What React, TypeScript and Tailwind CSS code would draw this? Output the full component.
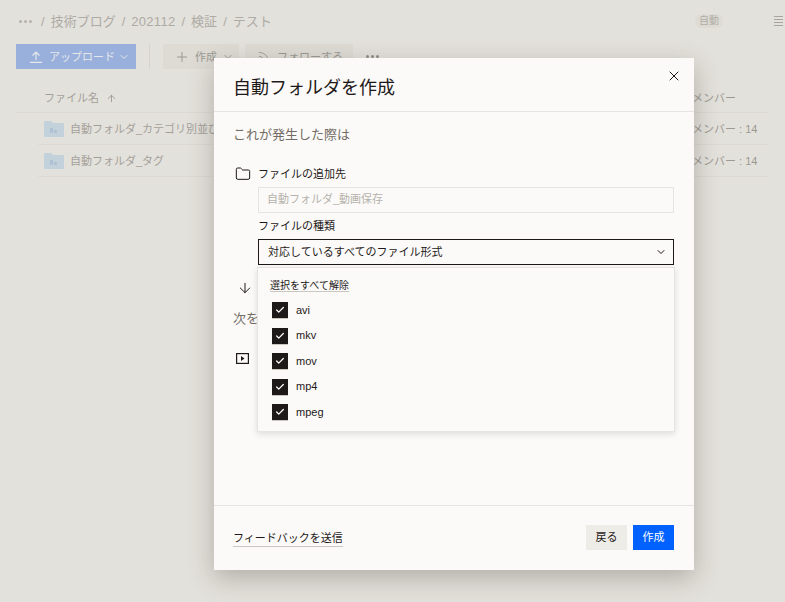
import { ArrowDown, ArrowUp, Check, ChevronDown, Folder, Plus, Rss, X } from "lucide-react";

const font = { fontFamily: '"Liberation Sans", "Noto Sans CJK JP", sans-serif' };

const fileTypes = ["avi", "mkv", "mov", "mp4", "mpeg"];

const rows = ["自動フォルダ_カテゴリ別並び替え", "自動フォルダ_タグ"];

function Dots({ className }: { className: string }) {
  return (
    <div className={`flex gap-[2px] ${className}`}>
      <span className="h-[3px] w-[3px] rounded-full bg-current" />
      <span className="h-[3px] w-[3px] rounded-full bg-current" />
      <span className="h-[3px] w-[3px] rounded-full bg-current" />
    </div>
  );
}

function FolderIcon() {
  return (
    <svg width="20" height="18" viewBox="0 0 20 18" className="shrink-0">
      <path d="M0 2a1 1 0 0 1 1-1h6l2 2h10a1 1 0 0 1 1 1v12a1 1 0 0 1-1 1H1a1 1 0 0 1-1-1z" fill="#c3d1da" />
      <rect x="6" y="8" width="3" height="5" fill="#aec2d3" />
      <rect x="10" y="10" width="3" height="3" fill="#aec2d3" />
    </svg>
  );
}

function UploadIcon() {
  return (
    <svg width="12" height="12" viewBox="0 0 12 12" fill="none" stroke="currentColor" strokeWidth="1.2" className="shrink-0">
      <path d="M6 9V1M2.5 4.5 6 1l3.5 3.5M0 11.4h12" />
    </svg>
  );
}

function PlayBoxIcon() {
  return (
    <svg width="13" height="11" viewBox="0 0 13 11" className="ml-[3px] mt-[25px]">
      <rect x="0.6" y="0.6" width="11.8" height="9.8" fill="none" stroke="#1e1919" strokeWidth="1.2" />
      <path d="M5 3v5l3.5-2.5z" fill="#1e1919" />
    </svg>
  );
}

export default function App() {
  return (
    <div style={font} className="relative h-[602px] w-[785px] overflow-hidden bg-[#e3e1db] text-[11px] text-[#9c9993]">
      {/* page behind the dialog */}
      <div className="flex h-[42px] items-center pl-[19px] pr-[2px]">
        <Dots className="text-[#b5b2ac]" />
        <div className="ml-[9px] flex items-center gap-[6px] pt-[1px] text-[13px] text-[#aeaba5]">
          <span>/</span>
          <span>技術ブログ</span>
          <span>/</span>
          <span className="tracking-[0.3px]">202112</span>
          <span>/</span>
          <span>検証</span>
          <span>/</span>
          <span>テスト</span>
        </div>
        <div className="ml-auto mr-[51px] rounded-full bg-[#dddbd4] px-[4px] text-[10px] leading-[14px] text-[#b0ada6]">自動</div>
        <div className="flex w-[9px] flex-col gap-[2px]">
          <span className="h-px bg-[#a8a5a0]" />
          <span className="h-px bg-[#a8a5a0]" />
          <span className="h-px bg-[#a8a5a0]" />
          <span className="h-px bg-[#a8a5a0]" />
        </div>
      </div>
      <div className="mt-[2px] flex h-[25px] items-center pl-[16px]">
        <div className="flex h-[25px] w-[120px] items-center gap-[7px] whitespace-nowrap bg-[#99b0dc] pl-[14px] text-[#e6e8ea]">
          <UploadIcon />
          <span className="pt-[1px]">アップロード</span>
          <ChevronDown size={12} className="-ml-[4px]" />
        </div>
        <div className="ml-[13px] h-[25px] w-px bg-[#d5d3cc]" />
        <div className="ml-[13px] flex h-[25px] w-[76px] items-center gap-[5px] whitespace-nowrap bg-[#dddbd4] pl-[11px]">
          <Plus size={16} strokeWidth={1.5} />
          <span className="pt-[1px]">作成</span>
          <ChevronDown size={12} />
        </div>
        <div className="ml-[6px] flex h-[25px] w-[108px] items-center gap-[6px] whitespace-nowrap bg-[#dddbd4] pl-[12px]">
          <Rss size={14} strokeWidth={1.5} />
          <span className="pt-[1px]">フォローする</span>
        </div>
        <Dots className="ml-[13px] text-[#8f8c87]" />
      </div>
      <div className="mx-[16px] mt-[15px] flex h-[29px] items-center border-b border-[#dcdad3] pl-[28px] pr-[10px]">
        <span className="text-[#a3a09a]">ファイル名</span>
        <ArrowUp size={11} className="ml-[7px]" />
        <span className="ml-auto w-[67px] whitespace-nowrap">メンバー</span>
      </div>
      {rows.map((name) => (
        <div key={name} className="ml-[38px] mr-[16px] flex h-[32px] items-center border-b border-[#dcdad3] pl-[6px] pr-[10px]">
          <FolderIcon />
          <span className="ml-[6px] whitespace-nowrap pt-[2px] text-[#a3a09a]">{name}</span>
          <span className="ml-auto w-[67px] whitespace-nowrap pt-[2px]">メンバー : 14</span>
        </div>
      ))}

      {/* dialog */}
      <div className="absolute left-[214px] top-[58px] flex h-[512px] w-[480px] flex-col bg-[#fbfaf8] text-[#1e1919] shadow-[0_8px_24px_rgba(60,55,45,0.3)]">
        <div className="relative flex h-[54px] items-center border-b border-[#e6e4de] pl-[19px]">
          <h1 className="pt-[6px] text-[18px] font-normal leading-none">自動フォルダを作成</h1>
          <X size={16} strokeWidth={1.5} className="absolute right-[12px] top-[10px]" />
        </div>
        <div className="flex-1 pl-[19px] pr-[20px]">
          <p className="mt-[14px] text-[13px] leading-[18px] text-[#736c64]">これが発生した際は</p>
          <div className="mt-[21px] ml-[2px] flex items-center gap-[7px]">
            <Folder size={16} strokeWidth={1.5} />
            <span className="leading-[18px]">ファイルの追加先</span>
          </div>
          <div className="ml-[25px] mt-[4px] flex h-[26px] items-center border border-[#e6e4de] pb-px pl-[8px] text-[#b5b2ab]">自動フォルダ_動画保存</div>
          <div className="ml-[25px] mt-[4px] leading-[18px]">ファイルの種類</div>
          <div className="ml-[25px] mt-[4px] flex h-[26px] items-center justify-between border border-[#1e1919] pl-[9px] pr-[6px]">
            <span>対応しているすべてのファイル形式</span>
            <ChevronDown size={12} strokeWidth={2} />
          </div>
          <ArrowDown size={16} strokeWidth={1.5} className="ml-[4px] mt-[15px]" />
          <p className="mt-[14px] text-[13px] leading-[18px] text-[#736c64]">次を実行</p>
          <PlayBoxIcon />
        </div>
        <div className="flex h-[65px] items-center justify-between border-t border-[#e6e4de] pb-px pl-[19px] pr-[20px]">
          <span className="mt-[2px] border-b border-[#c9c7c0] leading-[16px]">フィードバックを送信</span>
          <div className="flex gap-[6px]">
            <button className="h-[25px] w-[41px] bg-[#eeece7]">戻る</button>
            <button className="h-[25px] w-[41px] bg-[#0061fe] text-white">作成</button>
          </div>
        </div>

        {/* file type dropdown */}
        <div className="absolute left-[43px] top-[209px] h-[165px] w-[418px] border border-[#e6e4de] bg-[#fbfaf8] pl-[12px] pt-[9px] shadow-[0_2px_6px_rgba(60,55,45,0.15)]">
          <span className="border-b border-[#c9c7c0] text-[10px] leading-[15px]">選択をすべて解除</span>
          <div className="mt-[8px] flex flex-col gap-[8.5px]">
            {fileTypes.map((t) => (
              <div key={t} className="flex h-[17px] items-center gap-[8px]">
                <span className="ml-[2px] flex h-[16px] w-[16px] items-center justify-center bg-[#1e1919] text-white shadow-[0_1px_0_#c9c7c0]">
                  <Check size={10} strokeWidth={3} />
                </span>
                <span>{t}</span>
              </div>
            ))}
          </div>
        </div>
      </div>
    </div>
  );
}
